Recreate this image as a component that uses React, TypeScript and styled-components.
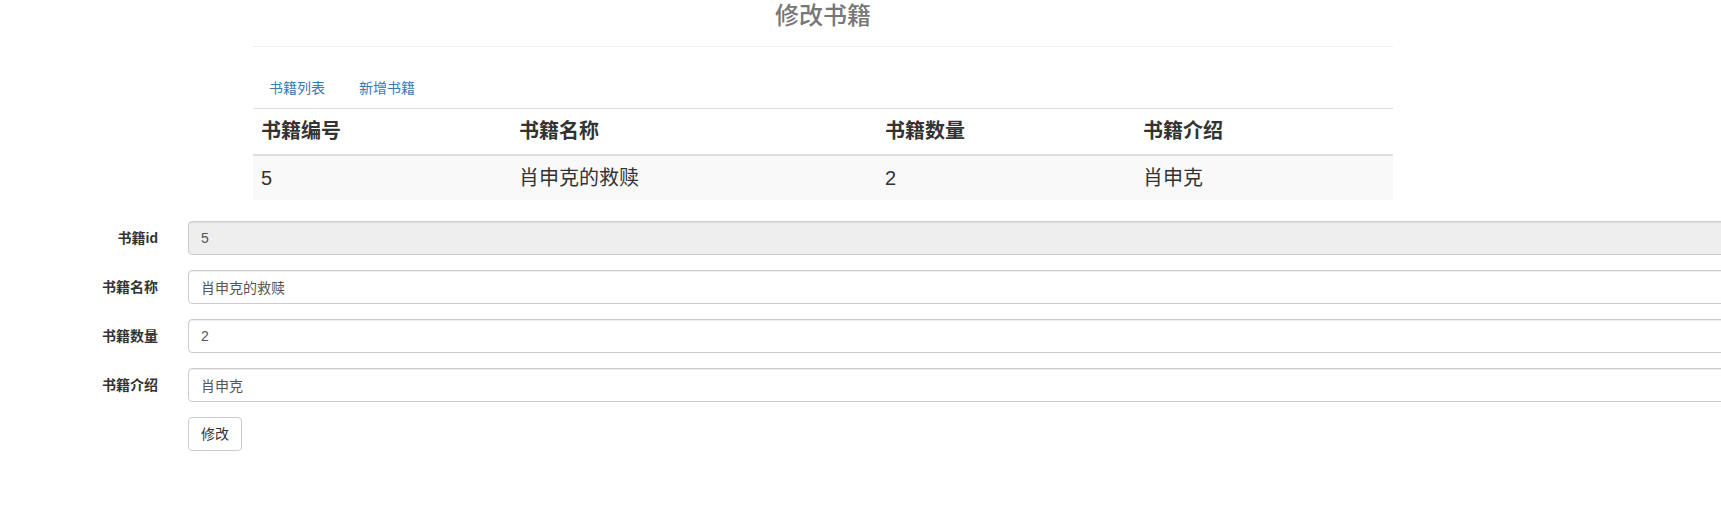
import React from "react";
import styled, { createGlobalStyle } from "styled-components";

const Global = createGlobalStyle`
  html, body { margin: 0; padding: 0; background: #fff; }
  body {
    font-family: "Liberation Sans", "Noto Sans CJK SC", sans-serif;
    font-size: 14px;
    line-height: 1.42857143;
    color: #333;
    overflow: hidden;
  }
  * { box-sizing: border-box; }
`;

const Page = styled.div`
  width: 100%;
  overflow: hidden;
`;

const Container = styled.div`
  width: 1140px;
  margin-left: 253px;
`;

const Header = styled.div`
  padding-top: 3px;
  padding-bottom: 17px;
  border-bottom: 1px solid #eee;
  text-align: center;
`;

const Title = styled.h3`
  margin: 0;
  font-size: 24px;
  font-weight: 500;
  line-height: 26px;
  color: #777;
`;

const Nav = styled.ul`
  list-style: none;
  margin: 21px 0 0;
  padding: 0 0 0 1px;
  display: flex;
  gap: 4px;
`;

const NavLink = styled.a`
  display: block;
  padding: 10px 15px;
  line-height: 20px;
  font-size: 14px;
  color: #337ab7;
  text-decoration: none;
`;

const Table = styled.table`
  width: 1140px;
  border-collapse: collapse;
  border-spacing: 0;
  margin-bottom: 21px;
  font-size: 20px;
  line-height: 1.42857143;
  table-layout: fixed;
`;

const Th = styled.th`
  text-align: left;
  font-weight: bold;
  padding: 8px;
  border-top: 1px solid #ddd;
  border-bottom: 2px solid #ddd;
  vertical-align: bottom;
`;

const Td = styled.td`
  padding: 8px;
  border-top: 1px solid #ddd;
  background: #f9f9f9;
  vertical-align: top;
`;

const Form = styled.form`
  display: flex;
  flex-direction: column;
  gap: 15px;
`;

const FormRow = styled.div`
  display: grid;
  grid-template-columns: 173px 1600px;
`;

const Label = styled.label`
  padding: 7px 15px 0 0;
  text-align: right;
  font-weight: bold;
  font-size: 14px;
  line-height: 20px;
  color: #333;
`;

const Field = styled.div`
  padding-left: 15px;
`;

const Input = styled.input<{ $disabled?: boolean }>`
  display: block;
  width: 100%;
  height: 34px;
  padding: 6px 12px;
  font-family: inherit;
  font-size: 14px;
  line-height: 1.42857143;
  color: #555;
  background: ${(p) => (p.$disabled ? "#eee" : "#fff")};
  border: 1px solid #ccc;
  border-radius: 4px;
  box-shadow: inset 0 1px 1px rgba(0, 0, 0, 0.075);
  outline: none;
`;

const Button = styled.button`
  display: inline-block;
  height: 34px;
  padding: 6px 12px;
  font-family: inherit;
  font-size: 14px;
  line-height: 1.42857143;
  color: #333;
  background: #fff;
  border: 1px solid #ccc;
  border-radius: 4px;
  cursor: pointer;
`;

const fields = [
  { label: "书籍id", value: "5", disabled: true },
  { label: "书籍名称", value: "肖申克的救赎" },
  { label: "书籍数量", value: "2" },
  { label: "书籍介绍", value: "肖申克" },
];

export default function App() {
  return (
    <Page>
      <Global />
      <Container>
        <Header>
          <Title>修改书籍</Title>
        </Header>
        <Nav>
          <li>
            <NavLink href="#">书籍列表</NavLink>
          </li>
          <li>
            <NavLink href="#">新增书籍</NavLink>
          </li>
        </Nav>
        <Table>
          <colgroup>
            <col style={{ width: 258 }} />
            <col style={{ width: 366 }} />
            <col style={{ width: 258 }} />
            <col style={{ width: 258 }} />
          </colgroup>
          <thead>
            <tr>
              <Th>书籍编号</Th>
              <Th>书籍名称</Th>
              <Th>书籍数量</Th>
              <Th>书籍介绍</Th>
            </tr>
          </thead>
          <tbody>
            <tr>
              <Td>5</Td>
              <Td>肖申克的救赎</Td>
              <Td>2</Td>
              <Td>肖申克</Td>
            </tr>
          </tbody>
        </Table>
      </Container>
      <Form onSubmit={(e) => e.preventDefault()}>
        {fields.map((f) => (
          <FormRow key={f.label}>
            <Label>{f.label}</Label>
            <Field>
              <Input
                defaultValue={f.value}
                readOnly={f.disabled}
                $disabled={f.disabled}
              />
            </Field>
          </FormRow>
        ))}
        <FormRow>
          <span />
          <Field>
            <Button type="submit">修改</Button>
          </Field>
        </FormRow>
      </Form>
    </Page>
  );
}
